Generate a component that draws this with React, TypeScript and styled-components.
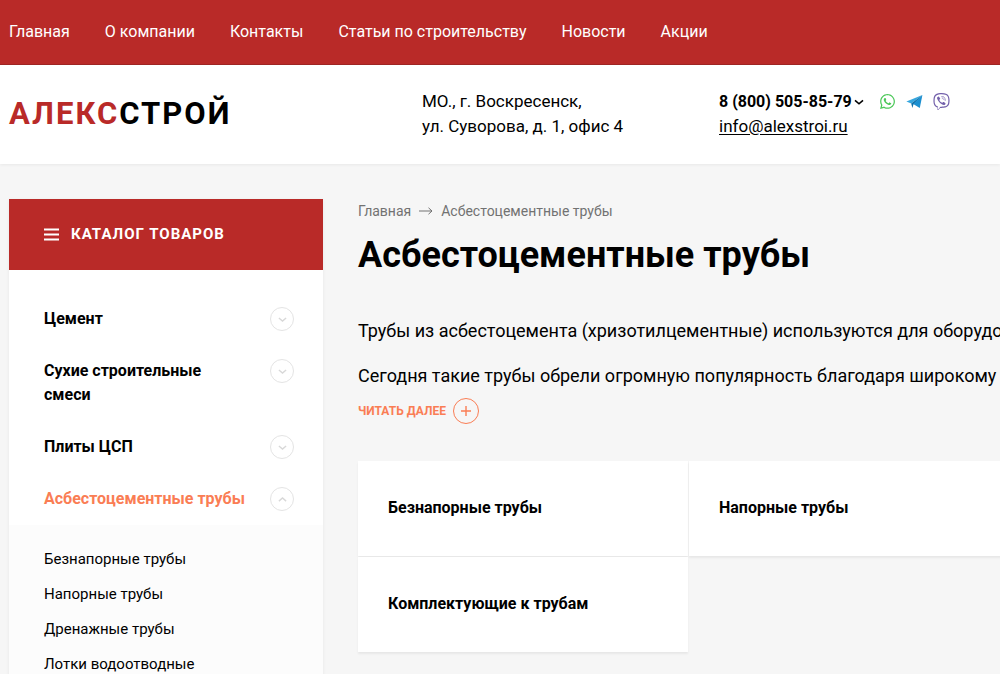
import React from "react";
import styled, { createGlobalStyle, css } from "styled-components";
import { FaWhatsapp, FaViber } from "react-icons/fa";

const color = {
  red: "#b92a28",
  redDark: "#a02624",
  accent: "#fa7d54",
  page: "#f6f6f6",
  line: "#e4e4e4",
  muted: "#727272",
};

const GlobalStyle = createGlobalStyle`
  *, *::before, *::after { box-sizing: border-box; }
  body {
    margin: 0;
    background: ${color.page};
    color: #000;
    font-family: Roboto, "Liberation Sans", sans-serif;
    font-size: 16px;
    line-height: 24px;
  }
  a { color: inherit; text-decoration: none; }
  ul { list-style: none; margin: 0; padding: 0; }
  button { font: inherit; color: inherit; background: none; border: 0; padding: 0; cursor: pointer; }
`;

const Page = styled.div`
  overflow-x: clip;
`;

const Nav = styled.nav`
  background: ${color.red};
  border-bottom: 1px solid ${color.redDark};
  color: #fff;
`;

const NavList = styled.ul`
  display: flex;
  gap: 35px;
  padding: 20px 9px;
  white-space: nowrap;
`;

const Header = styled.header`
  display: grid;
  grid-template-columns: 413fr 297fr 281fr;
  padding: 24px 0 25px 9px;
  background: #fff;
  box-shadow: 0 1px 3px rgba(0, 0, 0, 0.06);
  font-size: 17px;
  line-height: 25px;
`;

const Logo = styled.a`
  align-self: center;
  font-size: 31px;
  line-height: 50px;
  font-weight: 700;
  letter-spacing: 2px;
  color: #000;
`;

const LogoAccent = styled.span`
  color: ${color.red};
`;

const Address = styled.address`
  font-style: normal;
`;

const Contacts = styled.div`
  white-space: nowrap;
`;

const PhoneRow = styled.div`
  display: flex;
  align-items: center;
`;

const PhoneButton = styled.button`
  display: flex;
  align-items: center;
  gap: 2px;
  font-size: 16px;
  font-weight: 700;
`;

const Messengers = styled.div`
  display: flex;
  gap: 10px;
  margin-left: 15px;
`;

const Messenger = styled.a<{ $color: string }>`
  display: flex;
  color: ${(p) => p.$color};
`;

const Mail = styled.a`
  text-decoration: underline;
  text-underline-offset: 2px;
`;

const Body = styled.div`
  display: grid;
  grid-template-columns: 314px minmax(0, 1fr);
  column-gap: 35px;
  align-items: start;
  padding: 35px 0 0 9px;
`;

const Sidebar = styled.aside`
  background: #fff;
  box-shadow: 0 1px 4px rgba(0, 0, 0, 0.06);
`;

const CatalogTitle = styled.div`
  display: flex;
  align-items: center;
  gap: 12px;
  padding: 23px 35px 24px;
  background: ${color.red};
  color: #fff;
  font-size: 15px;
  font-weight: 700;
  letter-spacing: 1px;
  text-transform: uppercase;
`;

const CatalogList = styled.ul`
  padding-top: 23px;
`;

const CatalogRow = styled.div<{ $active?: boolean }>`
  display: flex;
  justify-content: space-between;
  align-items: flex-start;
  gap: 24px;
  padding: 14px 29px 14px 35px;
  font-weight: 700;
  ${(p) => p.$active && css`color: ${color.accent};`}
`;

const Toggle = styled.button`
  display: flex;
  flex: none;
  align-items: center;
  justify-content: center;
  width: 24px;
  height: 24px;
  border: 1px solid ${color.line};
  border-radius: 50%;
  color: #d8d8d8;
`;

const SubList = styled.ul`
  padding: 17px 35px;
  background: #fcfcfc;
  font-size: 15px;
  line-height: 35px;
`;

const Main = styled.main`
  min-width: 0;
`;

const Breadcrumbs = styled.nav`
  display: flex;
  align-items: center;
  gap: 8px;
  color: ${color.muted};
  font-size: 14px;
`;

const Title = styled.h1`
  margin: 6px 0 37px;
  font-size: 36px;
  line-height: 52px;
  font-weight: 700;
  white-space: nowrap;
`;

const Paragraph = styled.p`
  margin: 0 0 20px;
  font-size: 18px;
  line-height: 25px;
  white-space: nowrap;
`;

const ReadMore = styled.button`
  display: flex;
  align-items: center;
  gap: 7px;
  margin: -10px 0 37px;
  color: ${color.accent};
  font-size: 12px;
  font-weight: 700;
  text-transform: uppercase;
`;

const PlusCircle = styled.span`
  display: flex;
  align-items: center;
  justify-content: center;
  width: 26px;
  height: 26px;
  border: 1px solid ${color.accent};
  border-radius: 50%;
`;

const Cards = styled.div`
  display: grid;
  grid-template-columns: repeat(2, minmax(330px, 1fr));
  gap: 1px;
`;

const Card = styled.a`
  padding: 35px 30px 36px;
  background: #fff;
  box-shadow: 0 2px 2px rgba(0, 0, 0, 0.06);
  font-weight: 700;
`;

const Chevron = ({ up, size }: { up?: boolean; size: number }) => (
  <svg width={size} height={size} viewBox="0 0 10 10" fill="none" stroke="currentColor" strokeWidth="1.6" aria-hidden="true">
    <path d={up ? "M1 6.8 L5 3.4 L9 6.8" : "M1 3.4 L5 6.8 L9 3.4"} />
  </svg>
);

const Burger = () => (
  <svg width="15" height="13" viewBox="0 0 15 13" stroke="currentColor" strokeWidth="2" aria-hidden="true">
    <path d="M0 1.5H15M0 6.5H15M0 11.5H15" />
  </svg>
);

const Arrow = () => (
  <svg width="14" height="10" viewBox="0 0 14 10" fill="none" stroke="currentColor" aria-hidden="true">
    <path d="M0 5H13M9.5 1.8L13 5L9.5 8.2" />
  </svg>
);

const Plus = () => (
  <svg width="12" height="12" viewBox="0 0 12 12" stroke="currentColor" strokeWidth="1.4" aria-hidden="true">
    <path d="M6 1V11M1 6H11" />
  </svg>
);

const TelegramPlane = () => (
  <svg width="17" height="17" viewBox="0 0 17 17" aria-hidden="true">
    <path fill="#35a6de" d="M0.4 8.6 L16.4 2 L5.2 10.6 Z" />
    <path fill="#0f6fa8" d="M5.2 10.4 L16.4 2 L7.4 11.4 L6.4 15 Z" />
    <path fill="#1b8fd0" d="M16.4 2 L13.8 15 L7.2 11 Z" />
  </svg>
);

const navItems = ["Главная", "О компании", "Контакты", "Статьи по строительству", "Новости", "Акции"];

const catalog: { name: string; children?: string[] }[] = [
  { name: "Цемент" },
  { name: "Сухие строительные смеси" },
  { name: "Плиты ЦСП" },
  {
    name: "Асбестоцементные трубы",
    children: ["Безнапорные трубы", "Напорные трубы", "Дренажные трубы", "Лотки водоотводные"],
  },
];

const cards = ["Безнапорные трубы", "Напорные трубы", "Комплектующие к трубам"];

export default function App() {
  return (
    <Page>
      <GlobalStyle />
      <Nav>
        <NavList>
          {navItems.map((item) => (
            <li key={item}><a href="#">{item}</a></li>
          ))}
        </NavList>
      </Nav>
      <Header>
        <Logo href="#"><LogoAccent>АЛЕКС</LogoAccent>СТРОЙ</Logo>
        <Address>МО., г. Воскресенск,<br />ул. Суворова, д. 1, офис 4</Address>
        <Contacts>
          <PhoneRow>
            <PhoneButton type="button">8 (800) 505-85-79<Chevron size={10} /></PhoneButton>
            <Messengers>
              <Messenger href="#" $color="#4dc85a" aria-label="WhatsApp"><FaWhatsapp size={17} /></Messenger>
              <Messenger href="#" $color="#1b8fd0" aria-label="Telegram"><TelegramPlane /></Messenger>
              <Messenger href="#" $color="#7360ab" aria-label="Viber"><FaViber size={17} /></Messenger>
            </Messengers>
          </PhoneRow>
          <Mail href="#">info@alexstroi.ru</Mail>
        </Contacts>
      </Header>
      <Body>
        <Sidebar>
          <CatalogTitle><Burger />Каталог товаров</CatalogTitle>
          <CatalogList>
            {catalog.map(({ name, children }) => (
              <li key={name}>
                <CatalogRow $active={!!children}>
                  <a href="#">{name}</a>
                  <Toggle type="button" aria-label={name} aria-expanded={!!children}>
                    <Chevron size={9} up={!!children} />
                  </Toggle>
                </CatalogRow>
                {children && (
                  <SubList>
                    {children.map((child) => (
                      <li key={child}><a href="#">{child}</a></li>
                    ))}
                  </SubList>
                )}
              </li>
            ))}
          </CatalogList>
        </Sidebar>
        <Main>
          <Breadcrumbs>
            <a href="#">Главная</a>
            <Arrow />
            <span>Асбестоцементные трубы</span>
          </Breadcrumbs>
          <Title>Асбестоцементные трубы</Title>
          <Paragraph>Трубы из асбестоцемента (хризотилцементные) используются для оборудования</Paragraph>
          <Paragraph>Сегодня такие трубы обрели огромную популярность благодаря широкому диапазону</Paragraph>
          <ReadMore type="button">
            Читать далее
            <PlusCircle><Plus /></PlusCircle>
          </ReadMore>
          <Cards>
            {cards.map((card) => (
              <Card key={card} href="#">{card}</Card>
            ))}
          </Cards>
        </Main>
      </Body>
    </Page>
  );
}
